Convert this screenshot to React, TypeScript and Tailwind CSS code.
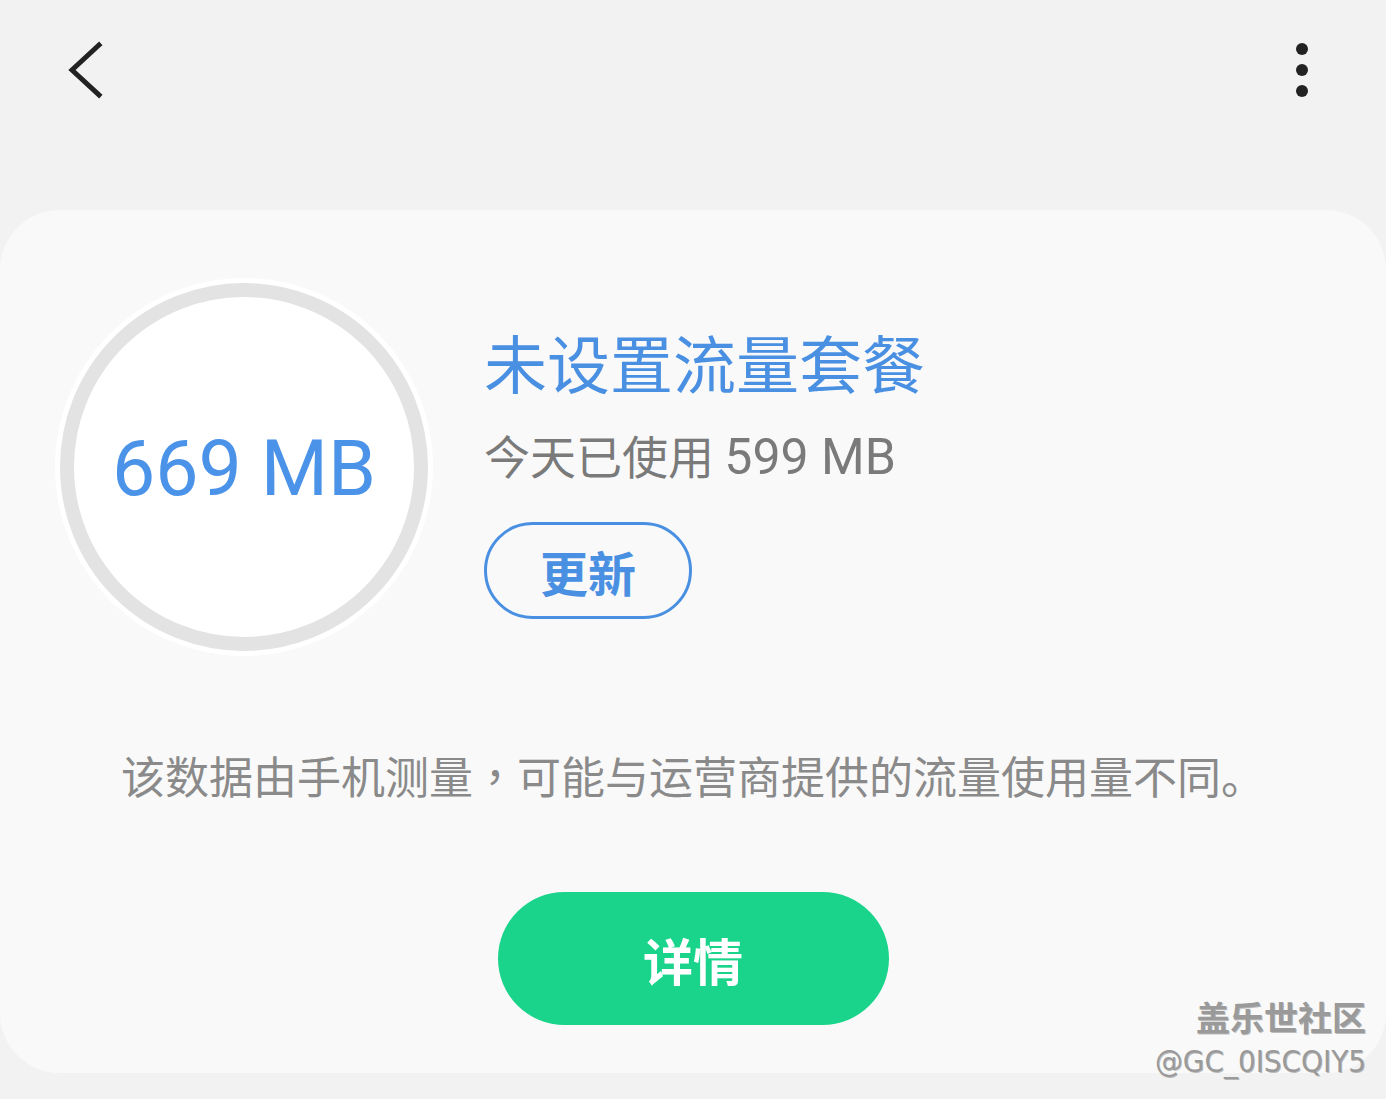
const cjk = '"Noto Sans CJK SC", "Noto Sans", sans-serif';
const latin = 'Roboto, "Noto Sans CJK SC", sans-serif';

function BackIcon() {
  return (
    <svg width="40" height="60" viewBox="0 0 40 60" fill="none" aria-hidden="true">
      <polyline points="34,5 7,30 34,55" stroke="#222" strokeWidth="5" strokeLinecap="square" />
    </svg>
  );
}

function MoreIcon() {
  return (
    <div className="flex flex-col items-center gap-[9px]">
      <span className="h-[12px] w-[12px] rounded-full bg-[#222]" />
      <span className="h-[12px] w-[12px] rounded-full bg-[#222]" />
      <span className="h-[12px] w-[12px] rounded-full bg-[#222]" />
    </div>
  );
}

function UsageRing() {
  return (
    <div className="flex h-[368px] w-[368px] shrink-0 items-center justify-center rounded-full border-[14px] border-[#e3e3e3] bg-white shadow-[0_0_0_5px_#ffffff]">
      <span className="pt-[4px] text-[77px] leading-none text-[#4a93e8]" style={{ fontFamily: latin }}>
        669 MB
      </span>
    </div>
  );
}

export default function App() {
  return (
    <div className="relative min-h-[1099px] w-full bg-[#f2f2f2]" style={{ fontFamily: cjk }}>
      {/* top bar */}
      <header className="flex h-[210px] items-start justify-between pl-[65px] pr-[78px] pt-[40px]">
        <BackIcon />
        <div className="pt-[3px]">
          <MoreIcon />
        </div>
      </header>

      {/* card */}
      <main className="flex h-[863px] flex-col rounded-[60px] bg-[#f9f9f9]">
        <div className="flex items-start pl-[60px] pt-[73px]">
          <UsageRing />
          <div className="ml-[56px] mt-[46px] flex flex-col items-start">
            <h1 className="text-[63px] leading-none text-[#4a90e2]">未设置流量套餐</h1>
            <p className="mt-[39px] text-[46px] leading-none text-[#7a7a7a]">
              今天已使用 <span className="text-[50px]" style={{ fontFamily: latin }}>599 MB</span>
            </p>
            <button className="mt-[40px] flex h-[97px] w-[208px] items-center justify-center rounded-full border-[3px] border-[#4a90e2] text-[48px] font-bold leading-none text-[#4a90e2]">
              更新
            </button>
          </div>
        </div>

        <p className="mt-[102px] text-center text-[44px] leading-none text-[#8a8a8a]">
          该数据由手机测量
          <span style={{ fontFamily: '"Noto Sans CJK TC", sans-serif' }}>，</span>
          可能与运营商提供的流量使用量不同。
        </p>

        <div className="mt-[95px] flex justify-center">
          <button className="flex h-[133px] w-[391px] items-center justify-center rounded-full bg-[#1bd48b] text-[50px] font-bold leading-none text-white">
            详情
          </button>
        </div>
      </main>

      {/* watermark */}
      <div className="absolute bottom-[22px] right-[20px] flex flex-col items-end text-[#9a9a9a] [text-shadow:1px_1px_0_rgba(0,0,0,0.25)]">
        <span className="text-[34px] font-bold leading-none">盖乐世社区</span>
        <span className="mt-[12px] text-[31px] leading-none" style={{ fontFamily: '"DejaVu Sans Condensed", "DejaVu Sans", sans-serif', fontWeight: 200 }}>
          @GC_0ISCQIY5
        </span>
      </div>
    </div>
  );
}
